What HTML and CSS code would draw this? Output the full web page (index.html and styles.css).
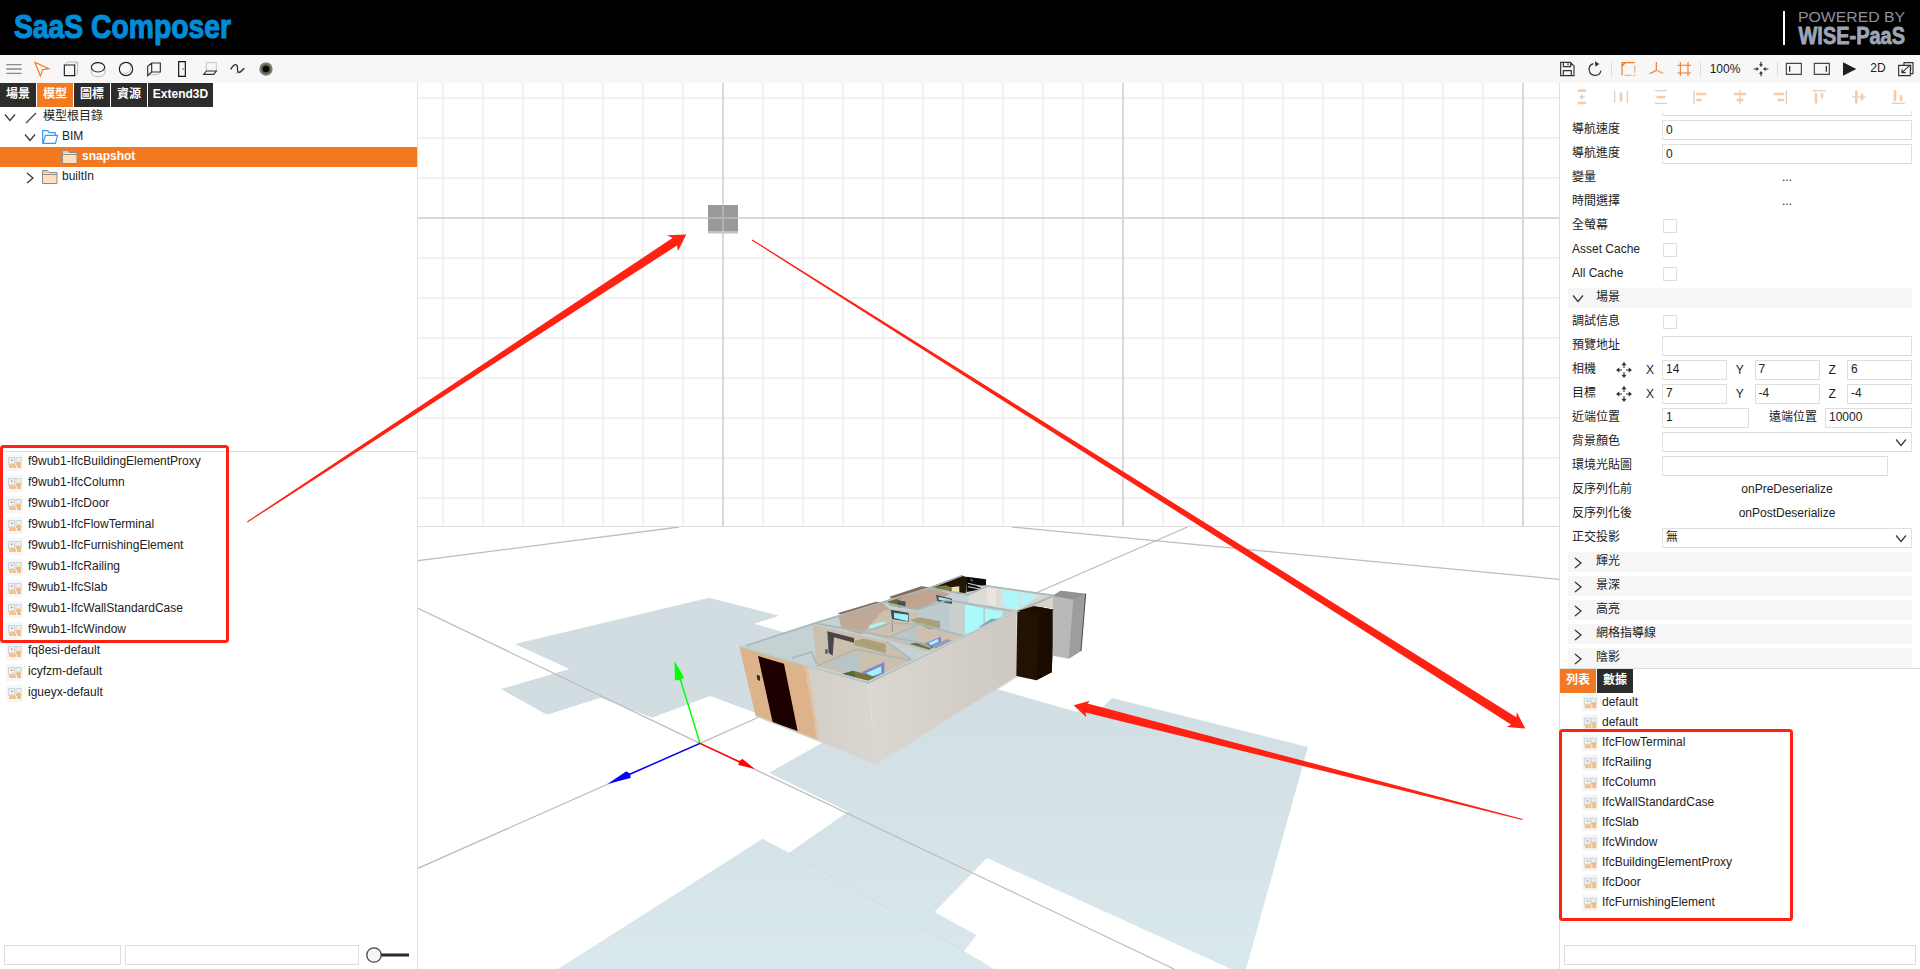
FILE: index.html
```html
<!DOCTYPE html>
<html lang="zh-Hant">
<head>
<meta charset="utf-8">
<title>SaaS Composer</title>
<link rel="stylesheet" href="styles.css">
</head>
<body>
<svg class="defs" width="0" height="0">
  <symbol id="thumb" viewBox="0 0 17 17">
    <rect width="17" height="17" fill="#f6f6f6"/>
    <rect x="2.5" y="3.5" width="6" height="7" fill="#eef2f3" stroke="#c9d6da"/>
    <rect x="10" y="3.5" width="5" height="6" fill="#eef2f3" stroke="#c9d6da"/>
    <path d="M5 5.500h1.500v1.500H5z" fill="#e8797d"/>
    <path d="M3 11l3-2 2 1 2 1v3H3z" fill="#f5c48e"/>
    <path d="M10 9l2.500-2L15 9v5h-4v-3h-1z" fill="#efbd85"/>
  </symbol>
  <symbol id="down" viewBox="0 0 12 12"><path d="M1 2.500l5 6 5-6" fill="none" stroke="#333" stroke-width="1.200"/></symbol>
  <symbol id="right" viewBox="0 0 12 12"><path d="M3 1l6 5-6 5" fill="none" stroke="#333" stroke-width="1.200"/></symbol>
  <symbol id="folder" viewBox="0 0 16 14">
    <path d="M.500 13.500V.500h5l1.500 2h8v11z" fill="#fde0c2" stroke="#8d8d8d"/>
    <path d="M1 1h4.300l1 2H1z" fill="#f7c595"/><path d="M.500 4.500H15" stroke="#8d8d8d"/>
  </symbol>
  <symbol id="move" viewBox="0 0 16 16">
    <path d="M8 0l2.600 3.300H5.400zM8 16l-2.600-3.300h5.200zM0 8l3.300-2.600v5.200zM16 8l-3.300 2.600V5.400z" fill="#333"/>
    <path d="M8 3v3M8 10v3M3 8h3M10 8h3" stroke="#333" stroke-width="1.100"/>
  </symbol>
</svg>

<header class="top">
  <svg class="logo" width="260" height="55"><text x="14" y="37.500" textLength="217" lengthAdjust="spacingAndGlyphs">SaaS Composer</text></svg>
  <svg class="powered" width="140" height="55">
    <path d="M4 11v34" stroke="#fff" stroke-width="2"/>
    <text class="by" x="18" y="22" textLength="107" lengthAdjust="spacingAndGlyphs">POWERED BY</text>
    <text class="wise" x="18.500" y="43.700" textLength="106.500" lengthAdjust="spacingAndGlyphs">WISE-PaaS</text>
  </svg>
</header>

<nav class="toolbar">
  <div class="tools">
    <svg viewBox="0 0 84 84"><path d="M19 29h46M19 42h46M19 55h46" stroke="#8a8a8a" stroke-width="4"/></svg>
    <svg viewBox="0 0 84 84"><path d="M21 22l41 19-18 3-7 19z" fill="none" stroke="#f27920" stroke-width="3.500"/></svg>
    <svg viewBox="0 0 84 84"><path d="M25 30l10-9h30v34l-9 8M56 30l9-9" fill="none" stroke="#bbb" stroke-width="3"/><path d="M25 30h31v32H25z" fill="none" stroke="#222" stroke-width="3.500"/></svg>
    <svg viewBox="0 0 84 84"><path d="M22 36v17c0 16 41 16 41 0V36" fill="none" stroke="#bbb" stroke-width="3"/><ellipse cx="42" cy="37" rx="20" ry="14" fill="none" stroke="#222" stroke-width="3.500"/></svg>
    <svg viewBox="0 0 84 84"><path d="M53 26c10 17-2 31-22 29" fill="none" stroke="#c4c4c4" stroke-width="3"/><circle cx="42" cy="42" r="20" fill="none" stroke="#222" stroke-width="3.500"/></svg>
    <svg viewBox="0 0 84 84"><path d="M22 59h30l9-8" fill="none" stroke="#bbb" stroke-width="3"/><path d="M35 24h26v27H35zM35 24L23 34v28l12-11" fill="none" stroke="#333" stroke-width="3.500"/></svg>
    <svg viewBox="0 0 84 84"><path d="M32 20h20v44H32z" fill="none" stroke="#111" stroke-width="3.500"/><circle cx="45" cy="42" r="2.500" fill="#555"/></svg>
    <svg viewBox="0 0 84 84"><path d="M31 48V23h30v25" fill="none" stroke="#c4c4c4" stroke-width="3"/><path d="M31 48h30l-8 10H23z" fill="none" stroke="#333" stroke-width="3.500"/></svg>
    <svg viewBox="0 0 84 84"><path d="M35 54c14 5 15-17 28-14" fill="none" stroke="#bbb" stroke-width="4"/><path d="M20 43c7-14 18-19 20-9 2 8-2 19 6 18 6-1 9-8 15-11" fill="none" stroke="#333" stroke-width="4"/></svg>
    <svg viewBox="0 0 84 84"><circle cx="42" cy="42" r="20" fill="#7a8474"/><circle cx="42" cy="42" r="15" fill="#59604f"/><circle cx="42" cy="42" r="10" fill="#200000"/></svg>
  </div>
  <div class="tools">
    <svg viewBox="0 0 84 84"><path d="M23 22h29l11 11v29H23zM31 22v13h22V22M31 62V47h24v15M45 25v6" fill="none" stroke="#333" stroke-width="3.500"/></svg>
    <svg viewBox="0 0 84 84"><path d="M37 26a18 18 0 1 0 23 21M43 27h5" fill="none" stroke="#333" stroke-width="3.500"/><path d="M42 19l13 8-12 8z" fill="#333"/></svg>
    <i class="sep"></i>
    <svg viewBox="0 0 84 84"><path d="M62 31v30H31" fill="none" stroke="#f7b27d" stroke-width="4" stroke-dasharray="22 6 6 6 30"/><path d="M24 61V23h38M24 33l9-9" fill="none" stroke="#f27920" stroke-width="3.500"/></svg>
    <svg viewBox="0 0 84 84"><path d="M43 21v25L23 56" fill="none" stroke="#f27920" stroke-width="3.500"/><path d="M43 46l21 9" stroke="#f7b27d" stroke-width="5"/></svg>
    <svg viewBox="0 0 84 84"><path d="M22 31h41M22 54h41M31 21v42M54 21v42" stroke="#f27920" stroke-width="3.200"/></svg>
    <i class="sep"></i>
    <span class="zoom">100%</span>
    <svg viewBox="0 0 84 84"><path d="M42 20v10M42 54v10M20 42h10M54 42h10" stroke="#333" stroke-width="3.500"/><path d="M42 36l-6-8h12zM42 48l-6 8h12zM36 42l-8-6v12zM48 42l8-6v12z" fill="#333"/></svg>
    <i class="sep"></i>
    <svg viewBox="0 0 84 84"><path d="M19 25h45v33H19z" fill="none" stroke="#444" stroke-width="3.500"/><path d="M29 33v17" stroke="#222" stroke-width="3.500"/></svg>
    <svg viewBox="0 0 84 84"><path d="M19 25h45v33H19z" fill="none" stroke="#444" stroke-width="3.500"/><path d="M55 33v17" stroke="#222" stroke-width="3.500"/></svg>
    <svg viewBox="0 0 84 84"><path d="M21 22l40 20-40 20z" fill="#1f1f1f"/></svg>
    <span class="mode">2D</span>
    <svg viewBox="0 0 84 84"><path d="M36 30v-7h27v33h-8M20 31h35v31H20zM31 52l24-23M41 31h15v14M30 43v10h11" fill="none" stroke="#333" stroke-width="3.500"/></svg>
  </div>
</nav>

<main class="work">
  <aside class="left">
    <div class="tree-pane">
      <div class="tabs"><b>場景</b><b class="on">模型</b><b>圖標</b><b>資源</b><b class="wide">Extend3D</b></div>
      <div class="tree">
        <div class="node"><svg class="ch"><use href="#down"/></svg><svg class="slash" viewBox="0 0 12 12"><path d="M1 11L11 1" stroke="#444" stroke-width="1.200"/></svg><span>模型根目錄</span></div>
        <div class="node lv1"><svg class="ch"><use href="#down"/></svg><svg class="fold" viewBox="0 0 16 14"><path d="M.700 13.300V.700h5l1.500 2h6v2.500M1 13.300l2.500-8h12l-2 8z" fill="none" stroke="#3d97f2" stroke-width="1.200"/></svg><span>BIM</span></div>
        <div class="node lv2 sel"><svg class="fold"><use href="#folder"/></svg><span>snapshot</span></div>
        <div class="node lv1"><svg class="ch"><use href="#right"/></svg><svg class="fold"><use href="#folder"/></svg><span>builtIn</span></div>
      </div>
    </div>
    <div class="assets">
      <div class="asset"><svg><use href="#thumb"/></svg><span>f9wub1-IfcBuildingElementProxy</span></div>
      <div class="asset"><svg><use href="#thumb"/></svg><span>f9wub1-IfcColumn</span></div>
      <div class="asset"><svg><use href="#thumb"/></svg><span>f9wub1-IfcDoor</span></div>
      <div class="asset"><svg><use href="#thumb"/></svg><span>f9wub1-IfcFlowTerminal</span></div>
      <div class="asset"><svg><use href="#thumb"/></svg><span>f9wub1-IfcFurnishingElement</span></div>
      <div class="asset"><svg><use href="#thumb"/></svg><span>f9wub1-IfcRailing</span></div>
      <div class="asset"><svg><use href="#thumb"/></svg><span>f9wub1-IfcSlab</span></div>
      <div class="asset"><svg><use href="#thumb"/></svg><span>f9wub1-IfcWallStandardCase</span></div>
      <div class="asset"><svg><use href="#thumb"/></svg><span>f9wub1-IfcWindow</span></div>
      <div class="asset"><svg><use href="#thumb"/></svg><span>fq8esi-default</span></div>
      <div class="asset"><svg><use href="#thumb"/></svg><span>icyfzm-default</span></div>
      <div class="asset"><svg><use href="#thumb"/></svg><span>igueyx-default</span></div>
    </div>
    <div class="left-foot">
      <div class="box kind"></div><div class="box find"></div>
      <svg width="46" height="20"><path d="M16 10h28" stroke="#8d938f" stroke-width="4"/><path d="M16 10h28" stroke="#2a2a2a" stroke-width="2"/><circle cx="9" cy="10" r="7.200" fill="#f6f6f6" stroke="#444" stroke-width="1.300"/></svg>
    </div>
  </aside>

  <section class="views">
    <svg class="plan" viewBox="418 83 1141 443">
      <defs><pattern id="cells" x="443" y="98" width="40" height="40" patternUnits="userSpaceOnUse"><path d="M0 0v40M0 0h40M40 0v40M0 40h40" stroke="#f1f1f1" stroke-width="2"/></pattern></defs>
      <rect x="418" y="83" width="1141" height="443" fill="url(#cells)"/>
      <rect x="708" y="205" width="30" height="26" fill="#999"/><rect x="708" y="231" width="30" height="2.500" fill="#c3c3c3"/>
      <path d="M418 218h1141M723 83v443M1123 83v443M1523 83v443" stroke="#c4c4c4" stroke-opacity=".55" stroke-width="2"/>
    </svg>
    <svg class="scene" viewBox="418 527 1141 442">
      <defs>
        <linearGradient id="ground" gradientUnits="userSpaceOnUse" x1="1000" y1="690" x2="1000" y2="969"><stop offset="0" stop-color="#d1dee3"/><stop offset="1" stop-color="#d9e8ec"/></linearGradient>
        <linearGradient id="wall"><stop offset="0" stop-color="#dcd8d1"/><stop offset="1" stop-color="#cdc8c1"/></linearGradient>
        <linearGradient id="front"><stop offset="0" stop-color="#d2cdc7"/><stop offset="1" stop-color="#dad6d0"/></linearGradient>
      </defs>
      <path d="M515 644L709 597.700 779 615.700 754 623.700 800 637V730L756 713 710 696 652 717.700 600.600 697.700 547 714.700 501 689 569.600 669z" fill="#d1dde1"/>
      <path d="M822 743L769 772.700 848 811.700 789 852.700 762.600 838.700 558 969H994L964 951 976.500 935 934.500 912 987 858 1000 864 1231 969H1246L1308 747 1112 698 1103 707 1076 711.700 995 688.500z" fill="url(#ground)"/>
      <path d="M789 852.700L964 951" stroke="#c9dae4" stroke-width=".7"/>
      <g stroke="#bdbdbd" stroke-width="1.300" fill="none">
        <path d="M418 560.700L679 527M1012 527L1559 579.300M418 608.300L700 743.300 1000 886 1174 969M418 868.300L700 743.300 759 717M1020 600L1187.500 527"/>
      </g>
      <g stroke-width="1.400">
        <path d="M700 743.300L679 675" stroke="#0f0"/><path d="M674.500 661L675 680q5 1 9-2.500z" fill="#0f0"/>
        <path d="M700 743.300L628 775" stroke="#00f"/><path d="M607.500 784L626 771.500q5 1 4.500 6.500z" fill="#00f"/>
        <path d="M700 743.300L742 763" stroke="red"/><path d="M755 769L742.500 759q-4 1-4 6z" fill="red"/>
      </g>
      <!-- Building, drawn at three units per pixel -->
      <g transform="translate(720 560) scale(.33333)">
        <path d="M58 262L280 190 640 78 725 45 798 75 1000 105 890 155 445 372 255 320z" fill="#c5d1d3"/>
        <path d="M278 194L500 244 578 302 445 362 290 318z" fill="#cbbfae"/>
        <path d="M355 165L486 128 512 150 610 158 560 195 420 222 365 207z" fill="#bfa896"/>
        <path d="M352 160L468 125 490 128 372 165z" fill="#8c6a55"/>
        <path d="M490 150L590 156 600 190 735 230 625 275 495 238 430 218z" fill="#cdc0b0"/>
        <path d="M510 112L610 80 628 82 690 102 640 130 590 150 512 138z" fill="#bfa591"/>
        <path d="M508 110L604 79 628 82 530 119z" fill="#8c6a55"/>
        <path d="M632 80L725 47 742 52 738 98 720 102z" fill="#241504"/>
        <path d="M740 50L798 58V76L770 78 790 86 740 96z" fill="#0b0b0b"/><path d="M744 70l44 10M744 80l40 8M752 58l6 5" stroke="#ddd" stroke-width="3"/>
        <path d="M692 82l26-3v19l-22-1z" fill="#ece3a8"/>
        <path d="M634 82l44-6 20 8-12 10z" fill="#7c7b37"/>
        <path d="M748 104L802 80 990 108 886 155 745 130z" fill="#dcdcd8"/>
        <path d="M800 82l28 3v52l-26-5z" fill="#e9e4dc"/>
        <path d="M848 90l50 7v50l-50-9zM903 98l56 10-42 36-14 6z" fill="#aff6fb"/>
        <path d="M590 155L682 120 890 153 800 205 735 228 600 195z" fill="#bccbcd"/>
        <path d="M686 123l48 9v90l-46-8z" fill="#c8d0ce"/>
        <path d="M735 134l55 10v50l-30 20-25 8zM795 146l54 8-4 16-50 16z" fill="#a8fafb"/>
        <path d="M778 200l36-24 36 2-50 36z" fill="#8ea1aa"/>
        <path d="M322 214l80 20v14l-60-16-4 55-12-8z" fill="#49454c"/>
        <path d="M512 149l54 10v26l-50-8z" fill="#424b50"/><path d="M522 158l42 6v20l-42-10z" fill="#9cf2fa"/><path d="M517 180v36" stroke="#777" stroke-width="2"/>
        <path d="M648 104l48 12v16l-44-8z" fill="#49555c"/><path d="M656 111l34 7v7l-34-6z" fill="#9ee9f5"/>
        <path d="M445 197l48-13 4 6-46 16z" fill="#a9f5f7"/>
        <path d="M502 120l20-5 34 12v14l-50-8z" fill="#68652f"/><path d="M530 126l26-2v16l-20 2z" fill="#46504a"/>
        <path d="M570 180l30-8 60 12v22l-32 2z" fill="#aaa07b"/>
        <path d="M404 242l28-6 65 16v28l-94-25z" fill="#aaa178"/>
        <path d="M342 302l75-24v60l-20 4-55-17z" fill="#b7c5c8"/>
        <path d="M535 224l54-18v40l-22 6-32-9z" fill="#b9c5c7"/>
        <path d="M425 337l68-31v36l-36 14z" fill="#7e83cf"/><path d="M438 339l46-20v20l-28 10z" fill="#a3f2fb"/>
        <path d="M615 250l48-20v20l-28 12z" fill="#7e83cf"/><path d="M625 249l30-13v10l-22 10z" fill="#a3f2fb"/>
        <path d="M366 342l34-10 70 20-28 12z" fill="#77743a"/><path d="M366 342l34-10 10 26z" fill="#55653f"/>
        <path d="M568 252l28-6 46 14-14 9z" fill="#687451"/>
        <path d="M636 258l44-20 16 4-50 24z" fill="#939eb1"/>
        <path d="M316 268h7v13h-7z" fill="#465663"/>
        <g fill="none" stroke="#aab8bb" stroke-width="5">
          <path d="M78 257L290 188 640 80 728 46M286 190L590 246 632 262M500 244L578 302M290 318L410 268 575 302M505 232L600 192 735 230M215 294L275 276 290 312M440 214L512 190 600 192M590 150L682 120 892 155M490 126L592 150M628 84L745 104 802 78 1000 106"/>
          <path d="M60 260L255 316 445 368 890 157 1000 108" stroke="#b7c0c0" stroke-width="9"/>
          <path d="M60 258L255 314 445 364 890 152" stroke="#ccd7d8" stroke-width="3"/>
        </g>
        <path d="M445 372L890 155V350L468 612z" fill="url(#wall)"/>
        <path d="M255 318L445 372 468 612 293 542z" fill="url(#front)"/>
        <path d="M58 262L255 320 293 542 107 468z" fill="#ddb38b"/>
        <path d="M255 320l8 2 34 221-4-1z" fill="#e7bd98"/>
        <path d="M114 288L192 311 233 513 158 487z" fill="#1b0000"/>
        <path d="M110 344l10 3v16l-8-4z" fill="#29343a"/>
        <path d="M107 468L293 542 468 612 890 350" fill="none" stroke="#d4d8d8" stroke-width="4"/>
        <path d="M892 153L942 138 1003 149 995 337 949 361 889 348z" fill="#231200"/><path d="M958 160L1003 149 995 337 949 361z" fill="#1a0c00"/>
        <path d="M998 106L1022 92 1097 101 1083 273 1046 296 998 287z" fill="#b9b9b9"/><path d="M1060 119L1097 101 1083 273 1046 296z" fill="#9d9d9d"/><path d="M998 108L1022 92 1097 101 1062 119z" fill="#929292"/>
        <path d="M1097 101L1083 273" stroke="#50463d" stroke-width="3"/>
        <path d="M960 104L1000 108 998 145 960 140 890 155z" fill="#d8d3cc"/><path d="M890 155L998 108" stroke="#aeb7b7" stroke-width="6"/>
        <path d="M892 153L942 138 1003 149 958 160z" fill="#1d0f00"/>
      </g>
    </svg>
  </section>

  <aside class="right">
    <div class="aligns">
      <svg viewBox="-30 -30 60 60"><path d="M-9 -19H9M-9 18H9" class="o"/><path d="M-8 0H8M0 -8V8" class="g"/></svg>
      <svg viewBox="-30 -30 60 60"><path d="M-19 -18V18M19 -18V18" class="g"/><path d="M0 -10V10" class="o"/></svg>
      <svg viewBox="-30 -30 60 60"><path d="M-18 -19H18M-18 19H18" class="g"/><path d="M-10 0H10" class="o"/></svg>
      <svg viewBox="-30 -30 60 60"><path d="M-18 -20V20" class="g"/><path d="M-8 -9H16M-8 9H2" class="o"/></svg>
      <svg viewBox="-30 -30 60 60"><path d="M0 -20V20" class="g"/><path d="M-15 -9H15M-7 9H7" class="o"/></svg>
      <svg viewBox="-30 -30 60 60"><path d="M19 -20V20" class="g"/><path d="M-16 -9H9M-4 9H9" class="o"/></svg>
      <svg viewBox="-30 -30 60 60"><path d="M-20 -19H20" class="g"/><path d="M-9 -9V16M9 -9V0" class="o"/></svg>
      <svg viewBox="-30 -30 60 60"><path d="M-20 0H20" class="g"/><path d="M-8 -16V16M9 -7V7" class="o"/></svg>
      <svg viewBox="-30 -30 60 60"><path d="M-20 19H20" class="g"/><path d="M-9 -17V9M9 -2V9" class="o"/></svg>
    </div>
    <div class="props">
      <div class="row"><label></label><div class="box f"></div></div>
      <div class="row"><label>導航速度</label><div class="box f">0</div></div>
      <div class="row"><label>導航進度</label><div class="box f">0</div></div>
      <div class="row"><label>變量</label><div class="mid">...</div></div>
      <div class="row"><label>時間選擇</label><div class="mid">...</div></div>
      <div class="row"><label>全螢幕</label><i class="check"></i></div>
      <div class="row"><label>Asset Cache</label><i class="check"></i></div>
      <div class="row"><label>All Cache</label><i class="check"></i></div>
      <div class="row group"><svg><use href="#down"/></svg><span>場景</span></div>
      <div class="row"><label>調試信息</label><i class="check"></i></div>
      <div class="row"><label>預覽地址</label><div class="box f"></div></div>
      <div class="row xyz"><label><span>相機</span><svg><use href="#move"/></svg><em>X</em></label><div class="box">14</div><em>Y</em><div class="box">7</div><em>Z</em><div class="box">6</div></div>
      <div class="row xyz"><label><span>目標</span><svg><use href="#move"/></svg><em>X</em></label><div class="box">7</div><em>Y</em><div class="box">-4</div><em>Z</em><div class="box">-4</div></div>
      <div class="row"><label>近端位置</label><div class="box near">1</div><span class="far">遠端位置</span><div class="box near">10000</div></div>
      <div class="row"><label>背景顏色</label><div class="box f"><svg><use href="#down"/></svg></div></div>
      <div class="row"><label>環境光貼圖</label><div class="box env"></div></div>
      <div class="row"><label>反序列化前</label><div class="mid">onPreDeserialize</div></div>
      <div class="row"><label>反序列化後</label><div class="mid">onPostDeserialize</div></div>
      <div class="row"><label>正交投影</label><div class="box f pick">無<svg><use href="#down"/></svg></div></div>
      <div class="row group"><svg><use href="#right"/></svg><span>輝光</span></div>
      <div class="row group"><svg><use href="#right"/></svg><span>景深</span></div>
      <div class="row group"><svg><use href="#right"/></svg><span>高亮</span></div>
      <div class="row group"><svg><use href="#right"/></svg><span>網格指導線</span></div>
      <div class="row group"><svg><use href="#right"/></svg><span>陰影</span></div>
    </div>
    <div class="tabs"><b class="on">列表</b><b>數據</b></div>
    <div class="items">
      <div class="item"><svg><use href="#thumb"/></svg><span>default</span></div>
      <div class="item"><svg><use href="#thumb"/></svg><span>default</span></div>
      <div class="item"><svg><use href="#thumb"/></svg><span>IfcFlowTerminal</span></div>
      <div class="item"><svg><use href="#thumb"/></svg><span>IfcRailing</span></div>
      <div class="item"><svg><use href="#thumb"/></svg><span>IfcColumn</span></div>
      <div class="item"><svg><use href="#thumb"/></svg><span>IfcWallStandardCase</span></div>
      <div class="item"><svg><use href="#thumb"/></svg><span>IfcSlab</span></div>
      <div class="item"><svg><use href="#thumb"/></svg><span>IfcWindow</span></div>
      <div class="item"><svg><use href="#thumb"/></svg><span>IfcBuildingElementProxy</span></div>
      <div class="item"><svg><use href="#thumb"/></svg><span>IfcDoor</span></div>
      <div class="item"><svg><use href="#thumb"/></svg><span>IfcFurnishingElement</span></div>
    </div>
    <div class="box search"></div>
  </aside>
</main>

<svg class="marks" viewBox="0 0 1920 969">
  <g fill="none" stroke="#ff2213" stroke-width="3"><rect x="1.500" y="446.500" width="226" height="195" rx="2"/><rect x="1560.500" y="730.500" width="231" height="189" rx="2"/></g>
  <g fill="#ff2213">
    <path d="M247 521.500L672.500 238 667 235.300 686.300 234.500 678 251 677 245.500 247.600 522.500z"/>
    <path d="M752.400 239.500L1516.300 717.300 1516.800 712.300 1525.300 728.500 1506.800 727 1511 724.500 751.800 240.500z"/>
    <path d="M1522.700 818.900L1087.500 703.500 1090 700.700 1073.600 705.300 1086.400 717.300 1085.500 712.500 1522.300 819.900z"/>
  </g>
</svg>
</body>
</html>
```
FILE: styles.css
```css
* { box-sizing: border-box; }
body {
  margin: 0;
  width: 1920px;
  height: 969px;
  overflow: hidden;
  position: relative;
  display: flex;
  flex-direction: column;
  background: #fff;
  color: #222;
  font: 12px/20px "Liberation Sans", "Noto Sans CJK TC", sans-serif;
}
svg { display: block; flex: none; }
.defs { position: absolute; }

.top { height: 55px; flex: none; background: #000; display: flex; justify-content: space-between; }
.top svg { overflow: visible; }
.logo text { font: bold 34px "Liberation Sans", sans-serif; fill: #008cd9; stroke: #008cd9; stroke-width: 1.2px; }
.by { font: 14.500px "Liberation Sans", sans-serif; fill: #8c90a1; }
.wise { font: bold 23.500px "Liberation Sans", sans-serif; fill: #9ea5b5; stroke: #9ea5b5; stroke-width: .8px; }

.toolbar { height: 28px; flex: none; background: #f7f7f7; display: flex; justify-content: space-between; }
.tools { display: flex; align-items: center; }
.tools svg { width: 28px; height: 28px; }
.sep { width: 1px; height: 14px; margin: 0 2px; background: #ddd; }
.zoom { width: 44px; text-align: center; }
.mode { width: 28px; text-align: center; line-height: 18px; padding-bottom: 2px; }

.work { height: 886px; flex: none; display: flex; }
.left { width: 418px; flex: none; border-right: 1px solid #dedede; display: flex; flex-direction: column; }
.tree-pane { height: 369px; flex: none; border-bottom: 1px solid #dedede; }
.tabs { display: flex; gap: 1px; height: 24px; flex: none; }
.tabs b { width: 36px; text-align: center; background: #2c2c2c; color: #fff; line-height: 22px; }
.tabs .wide { width: 65px; }
.tabs .on { background: #f27920; }
.node { height: 20px; display: flex; align-items: center; padding-left: 4px; }
.node span { line-height: 17px; padding-bottom: 2px; }
.ch { width: 12px; height: 12px; margin-top: 2px; }
.slash { width: 12px; height: 12px; margin: 1px 6px 0 9px; }
.fold { width: 16px; height: 14px; margin: 0 4px 0 6px; }
.lv1 { padding-left: 24px; }
.lv2 { padding-left: 56px; }
.sel { background: #f27920; color: #fff; font-weight: bold; }

.assets { flex: 1; }
.asset { height: 21px; display: flex; align-items: center; padding: 0 0 1px 6px; gap: 5px; }
.asset svg { width: 17px; height: 17px; margin-top: 1px; }
.asset span, .item span { line-height: 16px; padding-bottom: 2px; }
.left-foot { display: flex; height: 24px; flex: none; padding: 0 0 0 4px; gap: 4px; }
.left-foot svg { margin-left: 2px; }
.box { height: 20px; flex: none; border: 1px solid #dedede; background: #fff; line-height: 18px; padding-left: 3px; }
.kind { width: 117px; }
.find { width: 234px; }

.views { width: 1141px; flex: none; display: flex; flex-direction: column; }
.plan { width: 1141px; height: 443px; }
.scene { width: 1141px; height: 443px; border-top: 1px solid #dedede; }

.right { width: 361px; flex: none; border-left: 1px solid #dedede; display: flex; flex-direction: column; }
.aligns { height: 28px; flex: none; display: flex; padding: 4px 2px; justify-content: space-around; }
.aligns svg { width: 20px; height: 20px; }
.o { stroke: #facaa4; stroke-width: 8; stroke-linecap: round; }
.g { stroke: #d3d3d3; stroke-width: 4; }
.props { height: 558px; flex: none; overflow: hidden; border-bottom: 1px solid #dedede; display: flex; flex-direction: column; justify-content: flex-end; gap: 4px; padding: 0 8px; }
.row { height: 20px; flex: none; display: flex; align-items: center; padding-left: 4px; }
.row label { width: 90px; flex: none; line-height: 18px; padding-bottom: 2px; display: flex; }
.f { width: 250px; display: flex; justify-content: space-between; }
.f svg { width: 12px; height: 12px; margin: 4px 4px 0 auto; }
.pick { line-height: 16px; }
.mid { flex: 1; text-align: center; line-height: 18px; padding-bottom: 2px; }
.check { width: 14px; height: 14px; border: 1px solid #dedede; margin-left: 1px; }
.group { background: #f6f6f6; }
.group svg { width: 12px; height: 12px; margin: 2px 12px 0 0; }
.group span { line-height: 18px; padding-bottom: 2px; }
.xyz label { padding: 0; line-height: 20px; align-items: center; }
.xyz label span { line-height: 18px; padding-bottom: 2px; }
.xyz label svg { width: 16px; height: 16px; margin-left: 20px; }
.xyz label em { margin-left: 14px; width: auto; }
.xyz em { font-style: normal; width: 28px; text-align: center; padding-right: 2px; line-height: 18px; padding-bottom: 1px; }
.xyz .box { width: 65px; line-height: 17px; }
.near { width: 87px; line-height: 17px; }
.far { width: 76px; text-align: right; padding: 0 8px 2px 0; line-height: 18px; }
.env { width: 226px; }
.items { flex: 1; }
.item { height: 20px; display: flex; align-items: center; gap: 4px; padding: 0 0 1px 22px; }
.item svg { width: 16px; height: 16px; }
.search { margin: 0 4px 4px; }

.marks { position: absolute; left: 0; top: 0; width: 1920px; height: 969px; pointer-events: none; }
```
